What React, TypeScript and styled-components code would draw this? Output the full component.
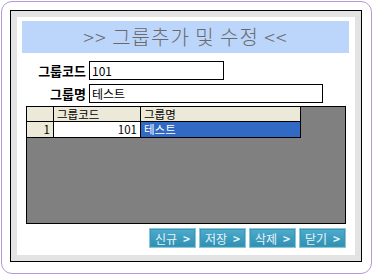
import React from "react";
import styled, { createGlobalStyle } from "styled-components";

const GlobalStyle = createGlobalStyle`
  html, body {
    margin: 0;
    padding: 0;
    background: #ffffff;
  }
  body {
    font-family: "Noto Sans CJK KR", "Liberation Sans", sans-serif;
    font-size: 12px;
  }
`;

const Outer = styled.div`
  box-sizing: border-box;
  margin: 1px 0 0 1px;
  width: 371px;
  height: 273px;
  border: 1px solid #b49ad3;
  border-radius: 11px;
  padding: 8px 9px 11px 8px;
  background: #fff;
`;

const Frame = styled.div`
  box-sizing: border-box;
  width: 352px;
  height: 252px;
  border: 1px solid #000;
`;

const Inner = styled.div`
  box-sizing: border-box;
  height: 100%;
  border: 6px solid #e3e3e3;
  background: #fff;
  padding: 4px 6px 7px 5px;
  display: flex;
  flex-direction: column;
`;

const Title = styled.div`
  height: 32px;
  background: #bcd6fb;
  color: #6a6a6a;
  font-size: 20px;
  font-weight: 300;
  line-height: 32px;
  text-align: center;
  letter-spacing: 1px;
`;

const Form = styled.div`
  margin-top: 8px;
  display: flex;
  flex-direction: column;
  gap: 4px;
`;

const Row = styled.div`
  display: flex;
  align-items: center;
  gap: 3px;
`;

const Label = styled.label`
  width: 64px;
  text-align: right;
  font-weight: bold;
  font-size: 13px;
  color: #000;
`;

const Input = styled.div<{ $w: number }>`
  box-sizing: border-box;
  width: ${(p) => p.$w}px;
  height: 19px;
  border: 1px solid #000;
  padding: 0 2px;
  font-size: 12px;
  line-height: 17px;
  color: #000;
`;

const Grid = styled.div`
  box-sizing: border-box;
  margin: 3px 0 0 4px;
  width: 320px;
  height: 118px;
  border: 1px solid #000;
  background: #808080;
`;

const GridRow = styled.div<{ $h: number }>`
  display: flex;
  height: ${(p) => p.$h}px;
  border-bottom: 1px solid #000;
  width: 274px;
`;

const Cell = styled.div<{ $w: number; $head?: boolean; $sel?: boolean; $right?: boolean }>`
  box-sizing: border-box;
  width: ${(p) => p.$w}px;
  border-right: 1px solid #000;
  background: ${(p) => (p.$sel ? "#316ac5" : p.$head ? "#ece9d8" : "#fff")};
  color: ${(p) => (p.$sel ? "#fff" : "#000")};
  text-align: ${(p) => (p.$right ? "right" : "left")};
  padding: 0 3px;
  font-size: 11.5px;
  line-height: 14px;
  white-space: nowrap;
`;

const Buttons = styled.div`
  margin-top: 4px;
  display: flex;
  justify-content: flex-end;
  gap: 3px;
  padding-right: 3px;
`;

const Button = styled.button`
  box-sizing: border-box;
  width: 47px;
  height: 20px;
  padding: 0;
  border: 1px solid #8cc6da;
  outline: 1px solid #3d95b5;
  outline-offset: -2px;
  background: linear-gradient(#4eaccd, #2e8fb2);
  color: #e6f4fa;
  font-family: "Noto Sans CJK KR", "Liberation Sans", sans-serif;
  font-size: 12px;
  line-height: 17px;
  cursor: pointer;
`;

const Arrow = styled.span`
  margin-left: 6px;
  font-weight: bold;
`;

export default function App() {
  const buttons = ["신규", "저장", "삭제", "닫기"];
  return (
    <>
      <GlobalStyle />
      <Outer>
        <Frame>
          <Inner>
            <Title>&gt;&gt; 그룹추가 및 수정 &lt;&lt;</Title>
            <Form>
              <Row>
                <Label>그룹코드</Label>
                <Input $w={135}>101</Input>
              </Row>
              <Row>
                <Label>그룹명</Label>
                <Input $w={234}>테스트</Input>
              </Row>
            </Form>
            <Grid>
              <GridRow $h={14}>
                <Cell $w={27} $head />
                <Cell $w={87} $head>그룹코드</Cell>
                <Cell $w={160} $head>그룹명</Cell>
              </GridRow>
              <GridRow $h={15}>
                <Cell $w={27} $head $right>1</Cell>
                <Cell $w={87} $right>101</Cell>
                <Cell $w={160} $sel>테스트</Cell>
              </GridRow>
            </Grid>
            <Buttons>
              {buttons.map((b) => (
                <Button key={b}>
                  {b}
                  <Arrow>&gt;</Arrow>
                </Button>
              ))}
            </Buttons>
          </Inner>
        </Frame>
      </Outer>
    </>
  );
}
